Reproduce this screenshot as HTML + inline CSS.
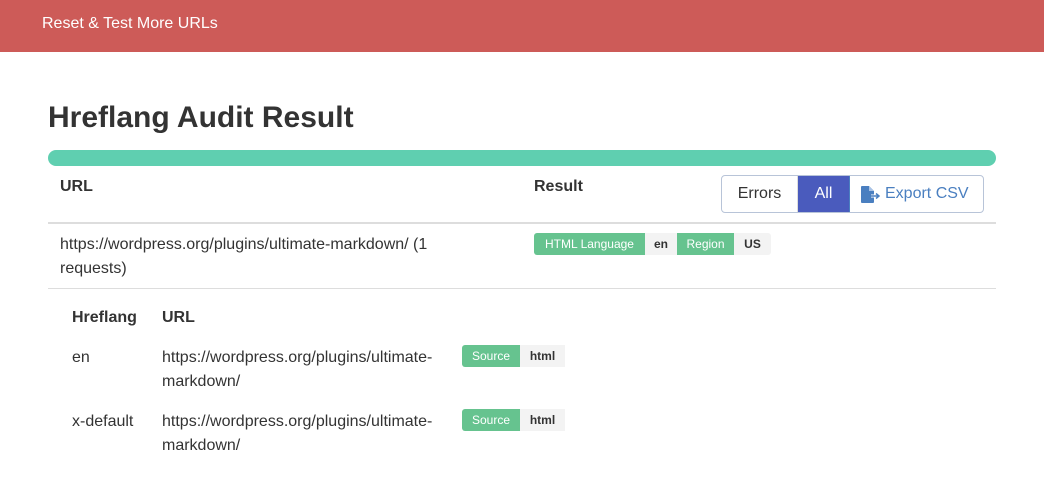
<!DOCTYPE html>
<html><head><style>
*{margin:0;padding:0;box-sizing:border-box}
body{width:1044px;height:499px;background:#fff;font-family:"Liberation Sans",sans-serif;color:#333;position:relative;overflow:hidden}
.a{position:absolute;white-space:nowrap}
.hdr{left:0;top:0;width:1044px;height:52px;background:#cd5b58}
.t{font-size:16px;line-height:24px}
.b{font-weight:bold}
.bd{position:absolute;height:22px;font-size:12px;line-height:22px;text-align:center}
.g{background:#66c38f;color:#fff}
.l{background:#f3f3f3;color:#333;font-weight:bold}
</style></head><body>
<div class="a hdr"></div>
<div class="a" style="left:42px;top:15px;color:#fff;font-size:16px">Reset &amp; Test More URLs</div>
<div class="a b" style="left:48px;top:101px;font-size:30px;color:#333">Hreflang Audit Result</div>
<div class="a" style="left:48px;top:150px;width:948px;height:16px;border-radius:8px;background:#5fcfb0"></div>
<div class="a t b" style="left:60px;top:175px">URL</div>
<div class="a t b" style="left:534px;top:175px">Result</div>
<div class="a" style="left:721px;top:175px;width:263px;height:38px;border:1px solid #b8c4d8;border-radius:4px;overflow:hidden">
 <div class="a" style="left:0;top:0;width:76px;height:36px;line-height:36px;text-align:center;font-size:16px;color:#333;border-right:1px solid #ddd">Errors</div>
 <div class="a" style="left:76px;top:0;width:51px;height:36px;line-height:36px;text-align:center;font-size:16px;color:#fff;background:#4a5bbd">All</div>
 <div class="a" style="left:127px;top:0;width:135px;height:36px;border-left:1px solid #4a7fc0;line-height:36px;font-size:16px;color:#4a7fc0">
  <svg style="position:absolute;left:11px;top:10px" width="20" height="17" viewBox="0 0 20 17"><path d="M0 1a1 1 0 0 1 1-1h7l5 5v11a1 1 0 0 1-1 1H1a1 1 0 0 1-1-1z" fill="#4a7fc0"/><path d="M8 0v5h5" fill="#a9c3e6"/><path d="M10 10h7M15 7.5l3 2.5-3 2.5" stroke="#fff" stroke-width="3" fill="none"/><path d="M10 10h7M15 7.5l3 2.5-3 2.5" stroke="#4a7fc0" stroke-width="1.5" fill="none"/></svg>
  <span style="position:absolute;left:35px;top:0">Export CSV</span></div>
</div>
<div class="a" style="left:48px;top:222px;width:948px;height:2px;background:#ddd"></div>
<div class="a t" style="left:60px;top:233px">https://wordpress.org/plugins/ultimate-markdown/ (1</div>
<div class="a t" style="left:60px;top:257px">requests)</div>
<div class="bd g" style="left:534px;top:233px;width:111px;border-radius:3px 0 0 3px">HTML Language</div>
<div class="bd l" style="left:645px;top:233px;width:32px">en</div>
<div class="bd g" style="left:677px;top:233px;width:57px">Region</div>
<div class="bd l" style="left:734px;top:233px;border-radius:0 3px 3px 0;width:37px">US</div>
<div class="a" style="left:48px;top:288px;width:948px;height:1px;background:#ddd"></div>
<div class="a t b" style="left:72px;top:306px">Hreflang</div>
<div class="a t b" style="left:162px;top:306px">URL</div>
<div class="a t" style="left:72px;top:346px">en</div>
<div class="a t" style="left:162px;top:346px">https://wordpress.org/plugins/ultimate-</div>
<div class="a t" style="left:162px;top:370px">markdown/</div>
<div class="bd g" style="left:462px;top:345px;width:58px;border-radius:3px 0 0 3px">Source</div>
<div class="bd l" style="left:520px;top:345px;width:45px">html</div>
<div class="a t" style="left:72px;top:410px">x-default</div>
<div class="a t" style="left:162px;top:410px">https://wordpress.org/plugins/ultimate-</div>
<div class="a t" style="left:162px;top:434px">markdown/</div>
<div class="bd g" style="left:462px;top:409px;width:58px;border-radius:3px 0 0 3px">Source</div>
<div class="bd l" style="left:520px;top:409px;width:45px">html</div>
</body></html>
